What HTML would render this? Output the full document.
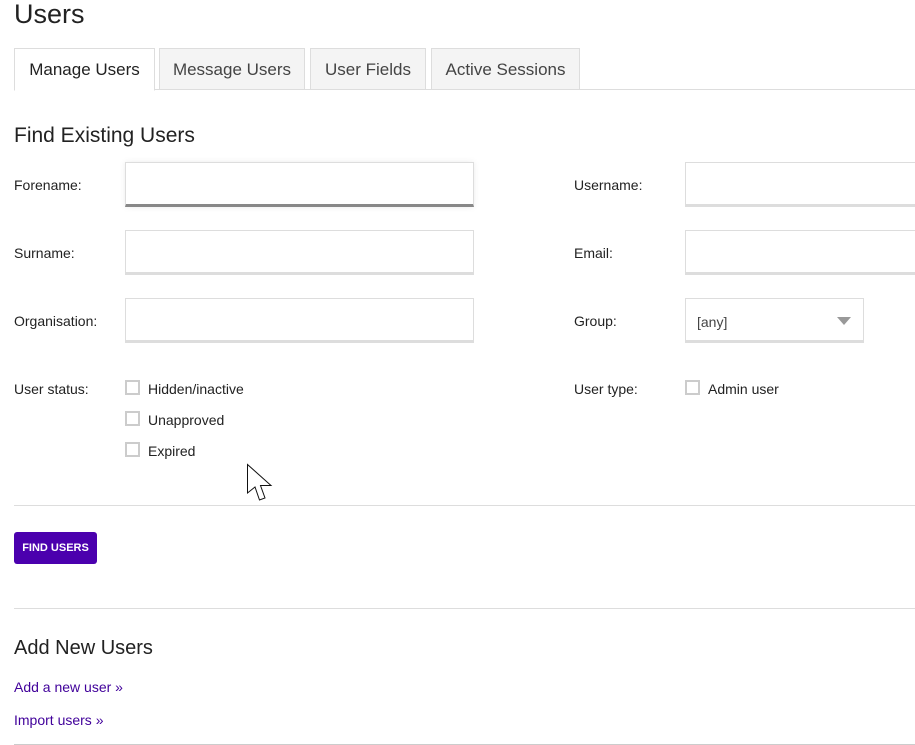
<!DOCTYPE html>
<html><head><meta charset="utf-8"><style>
*{box-sizing:border-box;margin:0;padding:0}
body{width:915px;height:745px;background:#fff;font-family:"Liberation Sans",sans-serif;color:#222;position:relative;overflow:hidden}
.a{position:absolute;white-space:nowrap}
.tab{position:absolute;top:48px;height:42px;border:1px solid #ddd;background:#f4f4f4;font-size:17px;color:#444;text-align:center;line-height:42px}
.lbl{position:absolute;font-size:14px;color:#222}
.inp{position:absolute;height:45px;border:1px solid #ddd;border-bottom:3px solid #ddd;background:#fff}
.cb{position:absolute;width:15px;height:15px;border:2px solid #ccc;background:#fff}
.hr{position:absolute;height:1px;background:#ddd}
</style></head><body>
<div class="a" style="left:14px;top:-1px;font-size:27px;color:#222">Users</div>
<div class="hr" style="left:14px;right:0;top:89px"></div>
<div class="tab" style="left:14px;width:141px;background:#fff;border-bottom:1px solid #fff;color:#222;height:43px">Manage Users</div>
<div class="tab" style="left:159px;width:146px">Message Users</div>
<div class="tab" style="left:310px;width:116px">User Fields</div>
<div class="tab" style="left:431px;width:149px">Active Sessions</div>
<div class="a" style="left:14px;top:124px;font-size:21px;color:#222">Find Existing Users</div>

<div class="lbl" style="left:14px;top:177px">Forename:</div>
<div class="inp" style="left:125px;top:162px;width:349px;border-bottom-color:#888;box-shadow:0 0 6px rgba(0,0,0,.08)"></div>
<div class="lbl" style="left:14px;top:245px">Surname:</div>
<div class="inp" style="left:125px;top:230px;width:349px"></div>
<div class="lbl" style="left:14px;top:313px">Organisation:</div>
<div class="inp" style="left:125px;top:298px;width:349px"></div>
<div class="lbl" style="left:14px;top:381px">User status:</div>
<div class="cb" style="left:125px;top:380px"></div><div class="lbl" style="left:148px;top:381px">Hidden/inactive</div>
<div class="cb" style="left:125px;top:411px"></div><div class="lbl" style="left:148px;top:412px">Unapproved</div>
<div class="cb" style="left:125px;top:442px"></div><div class="lbl" style="left:148px;top:443px">Expired</div>

<div class="lbl" style="left:574px;top:177px">Username:</div>
<div class="inp" style="left:685px;top:162px;width:240px"></div>
<div class="lbl" style="left:574px;top:245px">Email:</div>
<div class="inp" style="left:685px;top:230px;width:240px"></div>
<div class="lbl" style="left:574px;top:313px">Group:</div>
<div class="inp" style="left:685px;top:298px;width:179px"></div>
<div class="lbl" style="left:697px;top:314px;color:#444">[any]</div>
<div class="a" style="left:837px;top:317px;width:0;height:0;border-left:7px solid transparent;border-right:7px solid transparent;border-top:8px solid #999"></div>
<div class="lbl" style="left:574px;top:381px">User type:</div>
<div class="cb" style="left:685px;top:380px"></div><div class="lbl" style="left:708px;top:381px">Admin user</div>

<svg class="a" style="left:246px;top:463px" width="30" height="42" viewBox="0 0 30 42"><path d="M1.5 1.5 L1.5 30 L9 24 L13.5 37 L19 35 L14.5 22.5 L25 22.5 Z" fill="#fff" stroke="#111" stroke-width="1"/></svg>

<div class="hr" style="left:14px;right:0;top:505px"></div>
<div class="a" style="left:14px;top:532px;width:83px;height:32px;background:#4b00ae;border-radius:3px;color:#fff;font-size:11px;font-weight:bold;text-align:center;line-height:32px">FIND USERS</div>
<div class="hr" style="left:14px;right:0;top:608px"></div>
<div class="a" style="left:14px;top:637px;font-size:20px;color:#222">Add New Users</div>
<div class="a" style="left:14px;top:679px;font-size:14px;color:#40009a">Add a new user »</div>
<div class="a" style="left:14px;top:712px;font-size:14px;color:#40009a">Import users »</div>
<div class="hr" style="left:14px;right:0;top:744px;background:#ccc"></div>
</body></html>
